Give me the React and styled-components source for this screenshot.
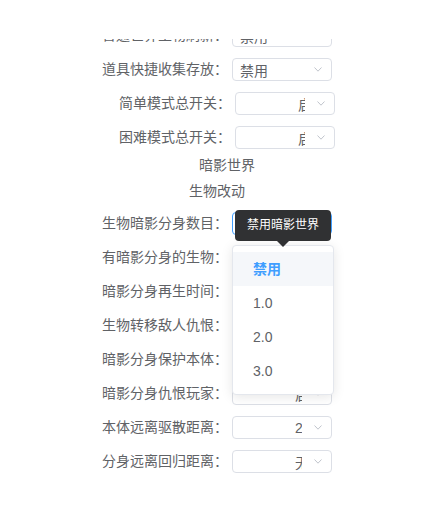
import React from 'react'
import styled, { createGlobalStyle } from 'styled-components'

const GlobalStyle = createGlobalStyle`
  body {
    margin: 0;
    background: #fff;
    font-family: "Liberation Sans", "Noto Sans CJK SC", sans-serif;
    color: #606266;
  }
`

const Page = styled.div`
  width: 434px;
`

const TopBar = styled.div`
  height: 39px;
  background: #fff;
`

const Viewport = styled.div`
  height: 475px;
  overflow: hidden;
`

const Form = styled.div`
  display: flex;
  flex-direction: column;
  margin-top: -21px;
`

const Row = styled.div`
  display: flex;
  justify-content: center;
  height: 34px;
`

const Group = styled.div`
  display: flex;
  align-items: flex-start;
  padding-left: ${p => (p.$indent ? 20 : 0)}px;
`

const Label = styled.span`
  margin-top: 6px;
  margin-right: 4px;
  font-size: 14px;
  line-height: 23px;
  white-space: nowrap;
  color: #606266;
`

const Heading = styled.div`
  height: 26px;
  line-height: 23px;
  font-size: 14px;
  text-align: center;
  padding-left: ${p => (p.$indent ? 20 : 0)}px;
  color: #606266;
`

const SelectBox = styled.div`
  position: relative;
  z-index: ${p => (p.$focused ? 10 : 'auto')};
  display: flex;
  align-items: center;
  box-sizing: border-box;
  width: 100px;
  height: 23px;
  margin-top: 6px;
  padding: 0 9px 0 7px;
  border: 1px solid ${p => (p.$focused ? '#409eff' : '#dcdfe6')};
  border-radius: 4px;
  background: #fff;
  font-size: 14px;
  color: #606266;
`

const Value = styled.span`
  white-space: nowrap;
  overflow: hidden;
  ${p =>
    p.$clip
      ? `
    margin-left: auto;
    width: 7px;
    margin-right: 12px;
  `
      : `
    flex: 1;
  `}
`

const Chevron = styled.svg`
  flex: none;
  width: 8px;
  height: 5px;
`

const Popup = styled.div`
  position: absolute;
  top: 32px;
  left: -1px;
  z-index: 20;
  box-sizing: border-box;
  width: 102px;
  padding: 6px 0;
  border: 1px solid #e4e7ed;
  border-radius: 4px;
  background: #fff;
  box-shadow: 0 2px 12px 0 rgba(0, 0, 0, 0.1);
`

const Option = styled.div`
  height: 34px;
  line-height: 34px;
  padding: 0 20px;
  font-size: 14px;
  color: ${p => (p.$active ? '#409eff' : '#606266')};
  font-weight: ${p => (p.$active ? 700 : 400)};
  background: ${p => (p.$active ? '#f5f7fa' : '#fff')};
`

const Tooltip = styled.div`
  position: absolute;
  top: -3px;
  left: 2px;
  z-index: 30;
  box-sizing: border-box;
  width: 96px;
  padding: 8px 12px;
  line-height: 15px;
  font-size: 12px;
  white-space: nowrap;
  color: #fff;
  background: #303133;
  border-radius: 4px;

  &::after {
    content: '';
    position: absolute;
    top: 100%;
    left: 50%;
    margin-left: -6px;
    border: 6px solid transparent;
    border-top-color: #303133;
  }
`

function Arrow() {
  return (
    <Chevron viewBox="0 0 8 5">
      <polyline points="0.5,0.5 4,4.2 7.5,0.5" fill="none" stroke="#c0c4cc" strokeWidth="1" />
    </Chevron>
  )
}

function Select({ value, clip, focused, children }) {
  return (
    <SelectBox $focused={focused}>
      <Value $clip={clip}>{value}</Value>
      <Arrow />
      {children}
    </SelectBox>
  )
}

function Field({ label, value, clip, indent, focused, children }) {
  return (
    <Row>
      <Group $indent={indent}>
        <Label>{label}：</Label>
        <Select value={value} clip={clip} focused={focused}>
          {children}
        </Select>
      </Group>
    </Row>
  )
}

const options = ['禁用', '1.0', '2.0', '3.0']

export default function App() {
  return (
    <Page>
      <GlobalStyle />
      <TopBar />
      <Viewport>
        <Form>
          <Field label="普通世界生物刷新" value="禁用" />
          <Field label="道具快捷收集存放" value="禁用" />
          <Field label="简单模式总开关" value="启用" clip indent />
          <Field label="困难模式总开关" value="启用" clip indent />
          <Heading $indent>暗影世界</Heading>
          <Heading>生物改动</Heading>
          <Field label="生物暗影分身数目" value="" focused>
            <Tooltip>禁用暗影世界</Tooltip>
            <Popup>
              {options.map(o => (
                <Option key={o} $active={o === '禁用'}>
                  {o}
                </Option>
              ))}
            </Popup>
          </Field>
          <Field label="有暗影分身的生物" value="启用" clip />
          <Field label="暗影分身再生时间" value="启用" clip />
          <Field label="生物转移敌人仇恨" value="启用" clip />
          <Field label="暗影分身保护本体" value="启用" clip />
          <Field label="暗影分身仇恨玩家" value="启用" clip />
          <Field label="本体远离驱散距离" value="2.0" clip />
          <Field label="分身远离回归距离" value="无限" clip />
        </Form>
      </Viewport>
    </Page>
  )
}
